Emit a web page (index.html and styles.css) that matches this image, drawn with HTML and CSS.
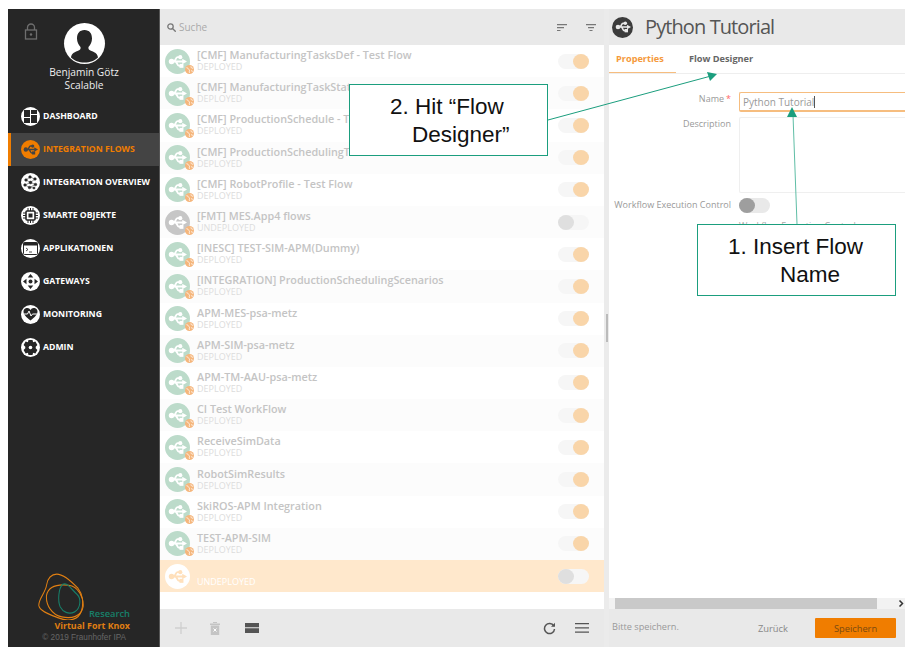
FILE: index.html
```html
<!DOCTYPE html>
<html lang="en">
<head>
  <meta charset="UTF-8">
  <title>Virtual Fort Knox - Integration Flows</title>
  <link rel="stylesheet" href="styles.css">
</head>
<body>
  <svg class="defs" width="0" height="0">
    <symbol id="usb" viewBox="0 0 24 24">
      <path d="M3 12h16M7 12c2.500 0 2.500-5.500 5-5.500h3M9 12c2.500 0 2.500 5.500 5 5.500h2" fill="none" stroke="currentColor" stroke-width="2.400"/>
      <circle cx="4.500" cy="12" r="3.500" fill="currentColor"/>
      <circle cx="15.500" cy="6.500" r="2.600" fill="currentColor"/>
      <rect x="14.500" y="15" width="5" height="5" fill="currentColor"/>
      <path d="M18 8.500l6 3.500-6 3.500z" fill="currentColor"/>
    </symbol>
    <symbol id="globe" viewBox="0 0 12 12">
      <circle cx="6" cy="6" r="6" fill="#f5b67c"/>
      <path d="M2 3.500c2 0 2 2 3.500 2.500S5 8.500 6 10.500M8 1.800C7.500 3.500 9 4 10.800 4.500M8 7.500l2.500 1" fill="none" stroke="#fff" stroke-width="1"/>
    </symbol>
  </svg>

  <div class="app">
    <aside class="sidebar">
      <div class="profile">
        <svg class="lock" width="14" height="17" viewBox="0 0 14 17">
          <path d="M3.500 7V4.500a3.500 3.500 0 0 1 7 0V7" fill="none" stroke="#6e6e6e" stroke-width="1.300"/>
          <rect x="1.500" y="7" width="11" height="9" fill="none" stroke="#6e6e6e" stroke-width="1.300"/>
          <circle cx="7" cy="11.500" r="1.200" fill="#6e6e6e"/>
        </svg>
        <div class="avatar">
          <svg width="41" height="41" viewBox="0 0 41 41">
            <path d="M20.500 7c5 0 7.500 3.500 7.500 8.500 0 3.500-1.500 6.500-3.500 8.500-.5 2 .5 3 3 4 4 1.500 6 3 6.500 6.500-3 3-8 5-13.500 5S10 37.500 7 34.500c.5-3.500 2.500-5 6.500-6.500 2.500-1 3.500-2 3-4-2-2-3.500-5-3.500-8.500C13 10.500 15.500 7 20.500 7z" fill="#262626"/>
          </svg>
        </div>
        <div class="user-name">Benjamin Götz</div>
        <div class="user-name">Scalable</div>
      </div>

      <nav class="nav">
        <a class="nav-item">
          <span class="nav-icon">
            <svg width="13" height="13" viewBox="0 0 13 13"><path d="M0 0h6v7H0zM7 0h6v4H7zM7 5h6v8H7zM0 8h6v5H0z" fill="#262626"/></svg>
          </span>DASHBOARD
        </a>
        <a class="nav-item active">
          <span class="nav-icon"><svg width="15" height="15"><use href="#usb"/></svg></span>INTEGRATION FLOWS
        </a>
        <a class="nav-item">
          <span class="nav-icon">
            <svg width="15" height="15" viewBox="0 0 15 15" fill="#262626" stroke="#262626" stroke-width=".5"><path d="M7 2l5 2-4.500 3.500L3 5zM7.500 7.500L2 10l4.500 2.500 6-3-5-2zM6.500 12.500L11 13" fill="none"/><circle cx="7" cy="2" r="1.300"/><circle cx="12" cy="4" r="1.300"/><circle cx="3" cy="5" r="1.300"/><circle cx="7.500" cy="7.500" r="1.400"/><circle cx="2" cy="10" r="1.300"/><circle cx="12.500" cy="9.500" r="1.300"/><circle cx="6.500" cy="12.500" r="1.300"/><circle cx="11" cy="13" r="1.100"/></svg>
          </span>INTEGRATION OVERVIEW
        </a>
        <a class="nav-item">
          <span class="nav-icon">
            <svg width="15" height="15" viewBox="0 0 15 15"><rect x="3" y="3" width="9" height="9" rx="1" fill="none" stroke="#262626" stroke-width="1.600"/><rect x="5.500" y="5.500" width="4" height="4" fill="#262626"/><path d="M5 0v3M7.500 0v3M10 0v3M5 12v3M7.500 12v3M10 12v3M0 5h3M0 7.500h3M0 10h3M12 5h3M12 7.500h3M12 10h3" stroke="#262626"/></svg>
          </span>SMARTE OBJEKTE
        </a>
        <a class="nav-item">
          <span class="nav-icon">
            <svg width="15" height="13" viewBox="0 0 15 13"><rect x=".5" y=".5" width="14" height="12" rx="1" fill="#fff" stroke="#262626"/><rect x=".5" y=".5" width="14" height="3" fill="#262626"/><path d="M3 6l2 1.500L3 9M6 10h3" fill="none" stroke="#262626" stroke-width=".8"/></svg>
          </span>APPLIKATIONEN
        </a>
        <a class="nav-item">
          <span class="nav-icon">
            <svg width="15" height="15" viewBox="0 0 15 15" fill="#262626"><circle cx="7.500" cy="7.500" r="2"/><path d="M7.500 0l2.800 3.500H4.700zM7.500 15l-2.800-3.500h5.600zM0 7.500l3.500-2.800v5.600zM15 7.500l-3.500 2.800V4.700z"/></svg>
          </span>GATEWAYS
        </a>
        <a class="nav-item">
          <span class="nav-icon">
            <svg width="15" height="14" viewBox="0 0 15 14"><path d="M7.500 13.500C3 10 .5 7.500.5 4.500A3.700 3.700 0 0 1 7.500 3a3.700 3.700 0 0 1 7 1.500c0 3-2.500 5.500-7 9z" fill="#262626"/><path d="M1 7h3.500l1.500-3 2 5 1.500-2H14" fill="none" stroke="#fff"/></svg>
          </span>MONITORING
        </a>
        <a class="nav-item">
          <span class="nav-icon">
            <svg width="15" height="15" viewBox="0 0 15 15"><path d="M5.500 0h4l.6 2.300 2.300-.7 2 3.400-1.700 1.700v1.600l1.700 1.700-2 3.400-2.300-.7-.6 2.300h-4l-.6-2.300-2.300.7-2-3.400 1.700-1.700V6.700L.6 5l2-3.400 2.300.7z" fill="#262626"/><circle cx="7.500" cy="7.500" r="1.800" fill="#fff"/></svg>
          </span>ADMIN
        </a>
      </nav>

      <div class="brand">
        <svg class="brand-mark" width="46" height="47" viewBox="0 0 54 46" preserveAspectRatio="none" fill="none">
          <path d="M22 1c8 0 16 6 25 14 5 5 7 14 4 22-3 9-15 11-27 7C12 40 2 37 1 32c-1-6 8-13 9-20C11 5 16 1 22 1z" stroke="#e07f12" stroke-width="1.200"/>
          <path d="M36 12c-12-1-24 1-26 10-1 9 6 19 18 21 11 2 23 0 25-10 1-9-6-20-17-21z" stroke="#e07f12" stroke-width="1.200"/>
          <path d="M29 11c6-2 10 5 17 10 5 4 4 14-3 17-7 3-14 0-17-5-3-6-2-18 3-22z" stroke="#17806a" stroke-width="1.200"/>
        </svg>
        <div class="brand-research">Research</div>
        <div class="brand-name">Virtual Fort Knox</div>
        <div class="brand-copy">© 2019 Fraunhofer IPA</div>
      </div>
    </aside>

    <section class="list-pane">
      <header class="list-head">
        <svg width="9" height="9" viewBox="0 0 9 9" fill="none" stroke="#777" stroke-width="1.300"><circle cx="3.500" cy="3.500" r="2.700"/><path d="M5.500 5.500L8.700 8.700"/></svg>
        <span class="search">Suche</span>
        <svg class="sort" width="10" height="7" viewBox="0 0 10 7" fill="#777"><path d="M0 0h10v1.200H0zM0 3h7v1.200H0zM0 6h3.500v1.200H0z"/></svg>
        <svg class="filter" width="10" height="7" viewBox="0 0 10 7" fill="#777"><path d="M0 0h10v1.200H0zM2 3h6v1.200H2zM3.500 6h3v1.200h-3z"/></svg>
      </header>

      <div class="rows">
        <div class="row">
          <span class="flow-icon"><svg width="19" height="19"><use href="#usb"/></svg><svg class="badge" width="9" height="9"><use href="#globe"/></svg></span>
          <div class="flow-text"><div class="flow-name">[CMF] ManufacturingTasksDef - Test Flow</div><div class="flow-state">DEPLOYED</div></div>
          <span class="toggle on"></span>
        </div>
        <div class="row">
          <span class="flow-icon"><svg width="19" height="19"><use href="#usb"/></svg><svg class="badge" width="9" height="9"><use href="#globe"/></svg></span>
          <div class="flow-text"><div class="flow-name">[CMF] ManufacturingTaskState</div><div class="flow-state">DEPLOYED</div></div>
          <span class="toggle on"></span>
        </div>
        <div class="row">
          <span class="flow-icon"><svg width="19" height="19"><use href="#usb"/></svg><svg class="badge" width="9" height="9"><use href="#globe"/></svg></span>
          <div class="flow-text"><div class="flow-name">[CMF] ProductionSchedule - Test</div><div class="flow-state">DEPLOYED</div></div>
          <span class="toggle on"></span>
        </div>
        <div class="row">
          <span class="flow-icon"><svg width="19" height="19"><use href="#usb"/></svg><svg class="badge" width="9" height="9"><use href="#globe"/></svg></span>
          <div class="flow-text"><div class="flow-name">[CMF] ProductionSchedulingTask</div><div class="flow-state">DEPLOYED</div></div>
          <span class="toggle on"></span>
        </div>
        <div class="row">
          <span class="flow-icon"><svg width="19" height="19"><use href="#usb"/></svg><svg class="badge" width="9" height="9"><use href="#globe"/></svg></span>
          <div class="flow-text"><div class="flow-name">[CMF] RobotProfile - Test Flow</div><div class="flow-state">DEPLOYED</div></div>
          <span class="toggle on"></span>
        </div>
        <div class="row">
          <span class="flow-icon off"><svg width="19" height="19"><use href="#usb"/></svg><svg class="badge" width="9" height="9"><use href="#globe"/></svg></span>
          <div class="flow-text"><div class="flow-name">[FMT] MES.App4 flows</div><div class="flow-state">UNDEPLOYED</div></div>
          <span class="toggle"></span>
        </div>
        <div class="row">
          <span class="flow-icon"><svg width="19" height="19"><use href="#usb"/></svg><svg class="badge" width="9" height="9"><use href="#globe"/></svg></span>
          <div class="flow-text"><div class="flow-name">[INESC] TEST-SIM-APM(Dummy)</div><div class="flow-state">DEPLOYED</div></div>
          <span class="toggle on"></span>
        </div>
        <div class="row">
          <span class="flow-icon"><svg width="19" height="19"><use href="#usb"/></svg><svg class="badge" width="9" height="9"><use href="#globe"/></svg></span>
          <div class="flow-text"><div class="flow-name">[INTEGRATION] ProductionSchedulingScenarios</div><div class="flow-state">DEPLOYED</div></div>
          <span class="toggle on"></span>
        </div>
        <div class="row">
          <span class="flow-icon"><svg width="19" height="19"><use href="#usb"/></svg><svg class="badge" width="9" height="9"><use href="#globe"/></svg></span>
          <div class="flow-text"><div class="flow-name">APM-MES-psa-metz</div><div class="flow-state">DEPLOYED</div></div>
          <span class="toggle on"></span>
        </div>
        <div class="row">
          <span class="flow-icon"><svg width="19" height="19"><use href="#usb"/></svg><svg class="badge" width="9" height="9"><use href="#globe"/></svg></span>
          <div class="flow-text"><div class="flow-name">APM-SIM-psa-metz</div><div class="flow-state">DEPLOYED</div></div>
          <span class="toggle on"></span>
        </div>
        <div class="row">
          <span class="flow-icon"><svg width="19" height="19"><use href="#usb"/></svg><svg class="badge" width="9" height="9"><use href="#globe"/></svg></span>
          <div class="flow-text"><div class="flow-name">APM-TM-AAU-psa-metz</div><div class="flow-state">DEPLOYED</div></div>
          <span class="toggle on"></span>
        </div>
        <div class="row">
          <span class="flow-icon"><svg width="19" height="19"><use href="#usb"/></svg><svg class="badge" width="9" height="9"><use href="#globe"/></svg></span>
          <div class="flow-text"><div class="flow-name">CI Test WorkFlow</div><div class="flow-state">DEPLOYED</div></div>
          <span class="toggle on"></span>
        </div>
        <div class="row">
          <span class="flow-icon"><svg width="19" height="19"><use href="#usb"/></svg><svg class="badge" width="9" height="9"><use href="#globe"/></svg></span>
          <div class="flow-text"><div class="flow-name">ReceiveSimData</div><div class="flow-state">DEPLOYED</div></div>
          <span class="toggle on"></span>
        </div>
        <div class="row">
          <span class="flow-icon"><svg width="19" height="19"><use href="#usb"/></svg><svg class="badge" width="9" height="9"><use href="#globe"/></svg></span>
          <div class="flow-text"><div class="flow-name">RobotSimResults</div><div class="flow-state">DEPLOYED</div></div>
          <span class="toggle on"></span>
        </div>
        <div class="row">
          <span class="flow-icon"><svg width="19" height="19"><use href="#usb"/></svg><svg class="badge" width="9" height="9"><use href="#globe"/></svg></span>
          <div class="flow-text"><div class="flow-name">SkiROS-APM Integration</div><div class="flow-state">DEPLOYED</div></div>
          <span class="toggle on"></span>
        </div>
        <div class="row">
          <span class="flow-icon"><svg width="19" height="19"><use href="#usb"/></svg><svg class="badge" width="9" height="9"><use href="#globe"/></svg></span>
          <div class="flow-text"><div class="flow-name">TEST-APM-SIM</div><div class="flow-state">DEPLOYED</div></div>
          <span class="toggle on"></span>
        </div>
        <div class="row selected">
          <span class="flow-icon blank"><svg width="19" height="19"><use href="#usb"/></svg></span>
          <div class="flow-text"><div class="flow-name">&nbsp;</div><div class="flow-state">UNDEPLOYED</div></div>
          <span class="toggle"></span>
        </div>
      </div>

      <footer class="list-foot">
        <svg width="12" height="12" viewBox="0 0 12 12" stroke="#cfcfcf" stroke-width="1.300"><path d="M6 0v12M0 6h12"/></svg>
        <svg class="foot-trash" width="10" height="13" viewBox="0 0 10 13" fill="#c4c4c4"><path d="M0 1.500h10V3H0zM3 0h4v1H3zM.8 3.500h8.400V13H.8z"/><path d="M3.500 6.500l3 3M6.500 6.500l-3 3" stroke="#fff"/></svg>
        <svg class="foot-stack" width="14" height="10" viewBox="0 0 14 10" fill="#555"><path d="M0 0h14v4.200H0zM0 5.300h14V10H0z"/></svg>
        <svg class="foot-refresh" width="13" height="13" viewBox="0 0 13 13" fill="none" stroke="#555" stroke-width="1.500"><path d="M10.800 4A5 5 0 1 0 11.500 7"/><path d="M12 .8v4H8" fill="#555" stroke="none"/></svg>
        <svg class="foot-menu" width="14" height="10" viewBox="0 0 14 10" fill="#555"><path d="M0 0h14v1.300H0zM0 4.200h14v1.300H0zM0 8.500h14v1.300H0z"/></svg>
      </footer>
    </section>

    <div class="gutter"><span class="grip"></span></div>

    <section class="detail">
      <header class="detail-head">
        <span class="detail-icon"><svg width="16" height="16"><use href="#usb"/></svg></span>
        <h1>Python Tutorial</h1>
      </header>

      <div class="tabs">
        <span class="tab active">Properties</span>
        <span class="tab">Flow Designer</span>
      </div>

      <form class="form">
        <label class="field-label">Name<b>*</b></label>
        <div class="name-input">Python Tutorial<span class="caret"></span></div>
        <label class="field-label">Description</label>
        <div class="desc-input"></div>
        <label class="field-label">Workflow Execution Control</label>
        <span class="toggle dark"></span>
        <div class="form-hint">Workflow Execution Control</div>
      </form>

      <div class="hscroll">
        <span class="hscroll-grip"></span>
        <span class="hscroll-thumb"></span>
        <svg width="6" height="7" viewBox="0 0 6 7" fill="none" stroke="#333" stroke-width="1.500"><path d="M1.500 .5l3 3-3 3"/></svg>
      </div>

      <footer class="detail-foot">
        <span class="save-hint">Bitte speichern.</span>
        <span class="back">Zurück</span>
        <button class="save" type="button">Speichern</button>
      </footer>
    </section>

    <svg class="arrows" width="897" height="638" viewBox="0 0 897 638" fill="none">
      <path d="M540 111L703 67" stroke="#1b9e7e"/>
      <path d="M709 65l-10-2 3 9z" fill="#1b9e7e"/>
      <path d="M789 215L785 106" stroke="#5fbea6"/>
      <path d="M784 98l-5 10h10z" fill="#1b9e7e"/>
    </svg>
    <div class="callout callout-flow">2. Hit “Flow<span>Designer”</span></div>
    <div class="callout callout-name">1. Insert Flow<span>Name</span></div>
  </div>
</body>
</html>
```

FILE: styles.css
```css
* {
  box-sizing: border-box;
}

body {
  margin: 9px 8px;
  background: #fff;
  font-family: "Open Sans", sans-serif;
}

.defs {
  position: absolute;
}

.app {
  position: relative;
  display: flex;
  width: 897px;
  height: 638px;
  overflow: hidden;
}

/* sidebar */
.sidebar {
  display: flex;
  flex-direction: column;
  width: 152px;
  flex: none;
  background: #262626;
  color: #fff;
  border-right: 1px solid #555;
}

.profile {
  position: relative;
  height: 91px;
  padding: 14px 0 0 1px;
  text-align: center;
}

.lock {
  position: absolute;
  left: 16px;
  top: 14px;
}

.avatar {
  width: 41px;
  height: 41px;
  margin: 0 auto 2px;
  border-radius: 50%;
  background: #fff;
  overflow: hidden;
}

.user-name {
  font-size: 10.200px;
  line-height: 13px;
  color: #eee;
}

.nav {
  display: flex;
  flex-direction: column;
}

.nav-item {
  display: flex;
  align-items: center;
  gap: 3px;
  height: 33px;
  padding: 0 0 1px 13px;
  font-size: 8.700px;
  font-weight: 700;
  white-space: nowrap;
  color: #fff;
}

.nav-icon {
  display: flex;
  align-items: center;
  justify-content: center;
  width: 19px;
  height: 19px;
  flex: none;
  border-radius: 50%;
  background: #fff;
  color: #262626;
}

.nav-item.active {
  padding-left: 10px;
  border-left: 3px solid #f07d00;
  background: #444;
  color: #f07d00;
}

.nav-item.active .nav-icon {
  background: #f07d00;
  color: #444;
}

.brand {
  position: relative;
  margin-top: auto;
  padding: 0 29px 4px 0;
  text-align: right;
}

.brand-mark {
  position: absolute;
  left: 30px;
  top: -35px;
}

.brand-research {
  font-size: 9.300px;
  font-weight: 600;
  line-height: 12px;
  color: #17806a;
}

.brand-name {
  font-size: 8.900px;
  font-weight: 700;
  line-height: 12px;
  color: #e07f12;
}

.brand-copy {
  margin-right: 4px;
  font-family: "Liberation Sans", sans-serif;
  font-size: 8.200px;
  line-height: 11px;
  color: #666;
}

/* flow list */
.list-pane {
  display: flex;
  flex-direction: column;
  width: 444px;
  flex: none;
}

.list-head,
.detail-head {
  display: flex;
  align-items: center;
  height: 36px;
  flex: none;
  background: #e9e9e9;
}

.list-head {
  padding: 0 8px 0 7px;
}

.search {
  margin-left: 3px;
  font-size: 10px;
  color: #aaa;
}

.sort {
  margin-left: auto;
}

.filter {
  margin-left: 19px;
}

.rows {
  flex: 1;
}

.row {
  display: flex;
  align-items: center;
  height: 32.200px;
  padding: 0 15px 0 5px;
}

.row:nth-child(even) {
  background: #fcfcfc;
}

.row.selected {
  background: #ffe8cc;
}

.flow-icon {
  position: relative;
  display: flex;
  align-items: center;
  justify-content: center;
  width: 25px;
  height: 25px;
  flex: none;
  border-radius: 50%;
  background: #bcdbca;
  color: #fff;
}

.flow-icon.off {
  background: #c6c6c6;
}

.flow-icon.blank {
  background: #fff;
  color: #ffe0bb;
}

.badge {
  position: absolute;
  right: -4px;
  bottom: 0;
}

.flow-text {
  flex: 1;
  min-width: 0;
  margin-left: 7px;
  padding-bottom: 1px;
  white-space: nowrap;
}

.flow-name {
  margin-bottom: 1px;
  font-size: 10.800px;
  font-weight: 600;
  line-height: 12px;
  color: #c4c4c4;
}

.flow-state {
  font-size: 9px;
  line-height: 10px;
  color: #dcdcdc;
}

.selected .flow-state {
  color: #fff;
}

.toggle {
  position: relative;
  display: block;
  width: 31px;
  height: 15px;
  flex: none;
  border-radius: 8px;
  background: #f6f6f6;
}

.toggle::after {
  content: "";
  position: absolute;
  left: 0;
  top: 0;
  width: 16px;
  height: 15px;
  border-radius: 50%;
  background: #dfdfdf;
}

.toggle.on::after {
  left: 15px;
  background: #f9d5a9;
}

.toggle.dark {
  background: #e9e9e9;
}

.toggle.dark::after {
  background: #9e9e9e;
}

.list-foot {
  display: flex;
  align-items: center;
  height: 38px;
  flex: none;
  padding: 0 15px;
  background: #e9e9e9;
}

.foot-trash {
  margin-left: 23px;
}

.foot-stack {
  margin-left: 25px;
}

.foot-refresh {
  margin-left: auto;
}

.foot-menu {
  margin-left: 19px;
}

.gutter {
  display: flex;
  align-items: center;
  justify-content: center;
  width: 5px;
  flex: none;
  background: #ebebeb;
}

.grip {
  width: 2px;
  height: 28px;
  background: #bbb;
}

/* detail */
.detail {
  display: flex;
  flex-direction: column;
  flex: 1;
  min-width: 0;
}

.detail-head {
  padding-left: 3px;
}

.detail-icon {
  display: flex;
  align-items: center;
  justify-content: center;
  width: 21px;
  height: 21px;
  border-radius: 50%;
  background: #3c3c3c;
  color: #e9e9e9;
}

h1 {
  margin: 0 0 2px 12px;
  font-size: 20px;
  font-weight: 400;
  letter-spacing: -0.9px;
  color: #555;
}

.tabs {
  display: flex;
  height: 29px;
  flex: none;
  border-bottom: 1px solid #eee;
}

.tab {
  padding: 7px 13px 0 7px;
  font-size: 9.200px;
  font-weight: 700;
  color: #666;
}

.tab.active {
  width: 67px;
  margin-right: 6px;
  border-bottom: 1px solid #f6bd7f;
  color: #f59a3c;
}

.form {
  display: grid;
  grid-template-columns: 122px 1fr;
  grid-template-rows: 20px 76px 16px;
  column-gap: 8px;
  row-gap: 5px;
  flex: 1;
  align-content: start;
  padding: 18px 0 0;
}

.field-label {
  font-size: 9px;
  line-height: 14px;
  text-align: right;
  white-space: nowrap;
  color: #999;
}

.field-label b {
  margin-left: 2px;
  font-weight: 400;
  color: #f66;
}

.name-input {
  padding-left: 3px;
  border: 1px solid #f6bd7f;
  border-right: 0;
  border-bottom-width: 2px;
  border-radius: 2px 0 0 2px;
  font-size: 10px;
  line-height: 18px;
  color: #999;
}

.caret {
  display: inline-block;
  width: 1px;
  height: 12px;
  vertical-align: -2px;
  background: #555;
}

.desc-input {
  border: 1px solid #efefef;
  border-right: 0;
  border-radius: 2px 0 0 2px;
}

.form-hint {
  grid-column: 2;
  font-size: 9px;
  line-height: 14px;
  color: #aaa;
}

.hscroll {
  display: flex;
  align-items: center;
  height: 11px;
  flex: none;
  background: #f2f2f2;
}

.hscroll-grip {
  width: 6px;
  height: 6px;
  flex: none;
}

.hscroll-thumb {
  width: 262px;
  height: 11px;
  background: #c9c9c9;
}

.hscroll svg {
  margin-left: 21px;
}

.detail-foot {
  display: flex;
  align-items: center;
  height: 38px;
  flex: none;
  padding: 0 9px 0 3px;
  background: #e9e9e9;
}

.save-hint {
  margin-bottom: 4px;
  font-size: 9.200px;
  color: #999;
}

.back {
  margin-left: auto;
  font-size: 9.400px;
  color: #888;
}

.save {
  width: 81px;
  height: 20px;
  margin-left: 27px;
  padding: 0;
  border: 0;
  border-radius: 1px;
  background: #f07d00;
  font-family: inherit;
  font-size: 9.300px;
  color: #7a4a10;
}

/* annotations drawn over the screenshot */
.arrows {
  position: absolute;
  left: 0;
  top: 0;
}

.callout {
  position: absolute;
  width: 199px;
  height: 72px;
  padding-top: 8px;
  border: 1px solid #1b9e7e;
  background: #fff;
  font-family: "Liberation Sans", sans-serif;
  font-size: 22.500px;
  line-height: 28px;
  white-space: nowrap;
  color: #111;
}

.callout span {
  display: block;
}

.callout-flow {
  left: 341px;
  top: 75px;
  padding-left: 40px;
}

.callout-flow span {
  margin-left: 22px;
}

.callout-name {
  left: 689px;
  top: 215px;
  padding-left: 30px;
}

.callout-name span {
  margin-left: 52px;
}
```
